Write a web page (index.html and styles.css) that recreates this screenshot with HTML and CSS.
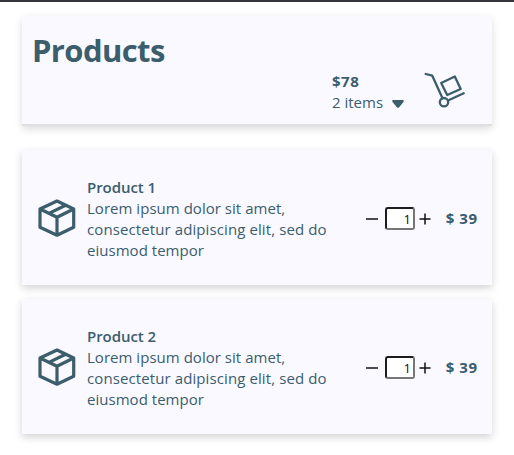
FILE: index.html
```html
<!DOCTYPE html>
<html lang="en">
<head>
<meta charset="utf-8">
<title>Products</title>
<link rel="stylesheet" href="styles.css">
</head>
<body>
<main class="page">
  <header class="header">
    <h1 class="title">Products</h1>
    <div class="summary">
      <div class="totals">
        <div class="total">$78</div>
        <div class="count"><span>2 items</span><svg class="caret" viewBox="0 0 12 8"><path d="M1.2 0H10.8Q12.4 .4 11.4 2L7.2 7.2Q6 8.3 4.8 7.2L.6 2Q-.4 .4 1.2 0Z"/></svg></div>
      </div>
      <svg class="cart" viewBox="0 0 42 36"><path d="M1.7 2 8.3 3.7 18.5 26.3M17.2 11 30.8 4.5 36.7 17 23.2 23ZM24 28.5 39.7 21.3"/><circle cx="20" cy="30.2" r="4.2"/></svg>
    </div>
  </header>
  <section class="list">
    <article class="card">
      <svg class="box" viewBox="0 0 38 38"><path d="M19 2 35.7 10V28.3L19 36.2 2 28.3V10ZM2 10 19 18.3 35.7 10M19 18.3V36M11 14.4 27.6 6.2"/></svg>
      <div class="info">
        <h2 class="name">Product 1</h2>
        <p class="desc"><span class="l1">Lorem ipsum dolor sit amet,</span> <span class="l2">consectetur adipiscing elit, sed do</span> <span class="l3">eiusmod tempor</span></p>
      </div>
      <div class="qty">
        <svg class="sign" viewBox="0 0 12 12"><path d="M0 6H12"/></svg>
        <input class="field" value="1" aria-label="Quantity">
        <svg class="sign" viewBox="0 0 12 12"><path d="M.5 6H11.5M6 .5V11.5"/></svg>
      </div>
      <div class="price">$ 39</div>
    </article>
    <article class="card">
      <svg class="box" viewBox="0 0 38 38"><path d="M19 2 35.7 10V28.3L19 36.2 2 28.3V10ZM2 10 19 18.3 35.7 10M19 18.3V36M11 14.4 27.6 6.2"/></svg>
      <div class="info">
        <h2 class="name">Product 2</h2>
        <p class="desc"><span class="l1">Lorem ipsum dolor sit amet,</span> <span class="l2">consectetur adipiscing elit, sed do</span> <span class="l3">eiusmod tempor</span></p>
      </div>
      <div class="qty">
        <svg class="sign" viewBox="0 0 12 12"><path d="M0 6H12"/></svg>
        <input class="field" value="1" aria-label="Quantity">
        <svg class="sign" viewBox="0 0 12 12"><path d="M.5 6H11.5M6 .5V11.5"/></svg>
      </div>
      <div class="price">$ 39</div>
    </article>
  </section>
</main>
</body>
</html>
```
FILE: styles.css
```css
* { box-sizing: border-box; }
body {
  margin: 0;
  background: #fff;
  color: #3b5d6c;
  font: 15px/21px "Open Sans", "Noto Sans", sans-serif;
}
h1, h2, p { margin: 0; }
svg { display: block; flex: none; }
.page {
  height: 455px;
  border-top: 2px solid #38343b;
  padding: 14px 22px 0;
}
.header {
  height: 110px;
  padding: 13px 26px 0 10px;
  background: #faf9ff;
  border-bottom: 2px solid #dedee3;
  box-shadow: 0 3px 8px rgba(0, 0, 0, .14);
}
.title {
  font-size: 31px;
  line-height: 42px;
  font-weight: 700;
  letter-spacing: -.6px;
}
.summary {
  display: flex;
  justify-content: flex-end;
  gap: 20px;
}
.totals { width: 72px; }
.total { font-weight: 700; letter-spacing: .5px; }
.count {
  display: flex;
  align-items: center;
  justify-content: space-between;
  white-space: nowrap;
}
.caret { width: 12px; height: 8px; margin-top: 3px; fill: #3b5d6c; }
.cart {
  width: 42px;
  height: 36px;
  margin-top: 1px;
  fill: none;
  stroke: #3b5d6c;
  stroke-width: 2.3;
  stroke-linejoin: round;
  stroke-linecap: round;
}
.list {
  display: grid;
  gap: 14px;
  margin-top: 24px;
}
.card {
  display: flex;
  align-items: center;
  height: 135px;
  padding: 2px 15px 0 16px;
  background: #faf9ff;
  box-shadow: 0 3px 8px rgba(0, 0, 0, .18);
}
.box {
  width: 38px;
  height: 38px;
  margin-right: 11px;
  margin-bottom: 2px;
  fill: none;
  stroke: #3b5d6c;
  stroke-width: 3.2;
  stroke-linejoin: round;
}
.info { width: 279px; white-space: nowrap; }
.name { font-size: 15px; line-height: 21px; font-weight: 600; letter-spacing: -.05px; }
.desc span { display: block; }
.l1 { letter-spacing: .03px; }
.l2 { letter-spacing: .1px; }
.l3 { letter-spacing: .03px; }
.qty {
  display: flex;
  align-items: center;
  gap: 5px;
}
.sign { width: 12px; height: 12px; fill: none; stroke: #111; stroke-width: 1.5; }
.field {
  width: 30px;
  height: 23px;
  margin: 0 -1px 0 2px;
  padding: 0 2px;
  border: 2px solid;
  border-color: #1d1b20 #767676 #767676 #1d1b20;
  border-radius: 3px;
  background: #fff;
  color: #111;
  font: 13px "Open Sans", sans-serif;
  text-align: right;
}
.price { margin-left: auto; font-weight: 700; letter-spacing: .5px; margin-right: -.5px; white-space: nowrap; }
```
